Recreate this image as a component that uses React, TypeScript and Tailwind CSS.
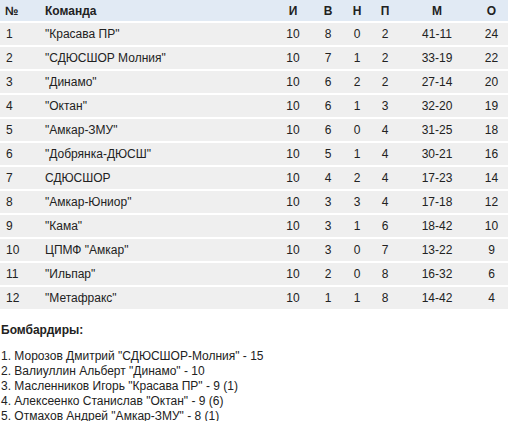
import React from "react";

const rows: [string, string, string, string, string, string, string, string][] = [
  ["1", "\"Красава ПР\"", "10", "8", "0", "2", "41-11", "24"],
  ["2", "\"СДЮСШОР Молния\"", "10", "7", "1", "2", "33-19", "22"],
  ["3", "\"Динамо\"", "10", "6", "2", "2", "27-14", "20"],
  ["4", "\"Октан\"", "10", "6", "1", "3", "32-20", "19"],
  ["5", "\"Амкар-ЗМУ\"", "10", "6", "0", "4", "31-25", "18"],
  ["6", "\"Добрянка-ДЮСШ\"", "10", "5", "1", "4", "30-21", "16"],
  ["7", "СДЮСШОР", "10", "4", "2", "4", "17-23", "14"],
  ["8", "\"Амкар-Юниор\"", "10", "3", "3", "4", "17-18", "12"],
  ["9", "\"Кама\"", "10", "3", "1", "6", "18-42", "10"],
  ["10", "ЦПМФ \"Амкар\"", "10", "3", "0", "7", "13-22", "9"],
  ["11", "\"Ильпар\"", "10", "2", "0", "8", "16-32", "6"],
  ["12", "\"Метафракс\"", "10", "1", "1", "8", "14-42", "4"],
];

const scorers = [
  "1. Морозов Дмитрий \"СДЮСШОР-Молния\" - 15",
  "2. Валиуллин Альберт \"Динамо\" - 10",
  "3. Масленников Игорь \"Красава ПР\" - 9 (1)",
  "4. Алексеенко Станислав \"Октан\" - 9 (6)",
  "5. Отмахов Андрей \"Амкар-ЗМУ\" - 8 (1)",
];

const cols = "grid grid-cols-[39px_234px_40px_30px_28px_28px_76px_33px]";

export default function App() {
  return (
    <div className="w-[510px] h-[421px] overflow-hidden bg-white text-[12px] text-[#222]" style={{ fontFamily: '"Liberation Sans", Arial, sans-serif' }}>
      <div className="w-[508px]">
        <div className={`${cols} h-[21px] items-center bg-[#e1eaf4] font-bold text-[#222]`}>
          <div className="pl-[5px]">№</div>
          <div className="pl-[6px]">Команда</div>
          <div className="text-center">И</div>
          <div className="text-center">В</div>
          <div className="text-center">Н</div>
          <div className="text-center">П</div>
          <div className="text-center">М</div>
          <div className="text-center">О</div>
        </div>
        {rows.map((r) => (
          <div key={r[0]} className={`${cols} h-[24px] items-center border-t-2 border-white bg-[#efefef]`}>
            <div className="pl-[6px]">{r[0]}</div>
            <div className="pl-[6px]">{r[1]}</div>
            <div className="text-center">{r[2]}</div>
            <div className="text-center">{r[3]}</div>
            <div className="text-center">{r[4]}</div>
            <div className="text-center">{r[5]}</div>
            <div className="text-center">{r[6]}</div>
            <div className="text-center">{r[7]}</div>
          </div>
        ))}
      </div>
      <div className="mt-[14px] pl-[1px] font-bold leading-[15px]">Бомбардиры:</div>
      <div className="mt-[11px] pl-[1px] leading-[15px]">
        {scorers.map((s) => (
          <div key={s}>{s}</div>
        ))}
      </div>
    </div>
  );
}
